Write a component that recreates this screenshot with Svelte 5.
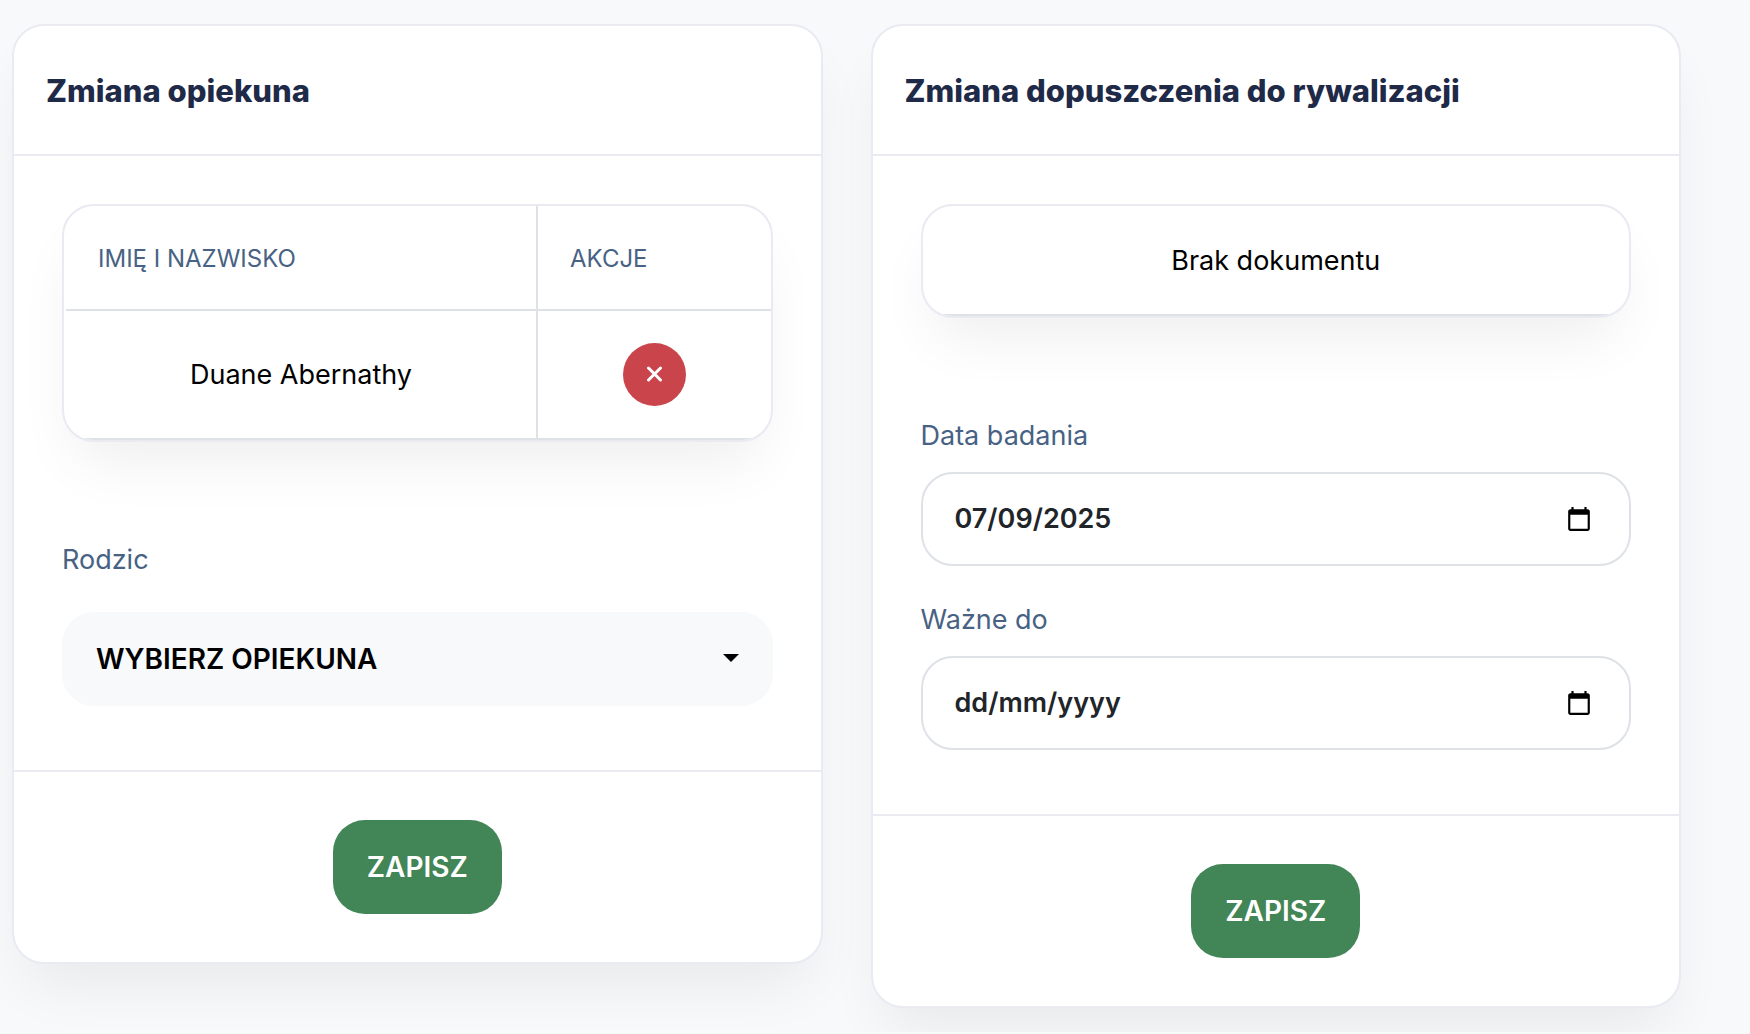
<script>
    let guardians = [{ id: 1, name: "Duane Abernathy" }];
    let parents = [];
    let parent = "";
    let examDate = "07/09/2025";
    let validUntil = "";

    function removeGuardian(id) {
        guardians = guardians.filter((g) => g.id !== id);
    }
</script>

<main>
    <form class="card" on:submit|preventDefault>
        <header>
            <h2>Zmiana opiekuna</h2>
        </header>

        <div class="body">
            <div class="table-box guardians">
                <table>
                    <thead>
                        <tr>
                            <th class="name">Imię i nazwisko</th>
                            <th>Akcje</th>
                        </tr>
                    </thead>
                    <tbody>
                        {#each guardians as guardian (guardian.id)}
                            <tr>
                                <td>{guardian.name}</td>
                                <td>
                                    <button
                                        type="button"
                                        class="remove"
                                        aria-label="Usuń"
                                        on:click={() => removeGuardian(guardian.id)}
                                    >
                                        <svg viewBox="0 0 17 17" width="17" height="17">
                                            <path d="M2.5 2 14.5 14M14.5 2 2.5 14" />
                                        </svg>
                                    </button>
                                </td>
                            </tr>
                        {/each}
                    </tbody>
                </table>
            </div>

            <div class="group parent">
                <label for="parent">Rodzic</label>
                <div class="select">
                    <select id="parent" bind:value={parent}>
                        <option value="">WYBIERZ OPIEKUNA</option>
                        {#each parents as p}
                            <option value={p.id}>{p.name}</option>
                        {/each}
                    </select>
                    <svg class="caret" viewBox="0 0 16 8" width="16" height="8">
                        <path d="M0 0h16L8 8z" />
                    </svg>
                </div>
            </div>
        </div>

        <footer>
            <button type="submit" class="save">ZAPISZ</button>
        </footer>
    </form>

    <form class="card" on:submit|preventDefault>
        <header>
            <h2>Zmiana dopuszczenia do rywalizacji</h2>
        </header>

        <div class="body">
            <div class="table-box documents">
                <table>
                    <tbody>
                        <tr>
                            <td>Brak dokumentu</td>
                        </tr>
                    </tbody>
                </table>
            </div>

            <div class="group">
                <label for="exam-date">Data badania</label>
                <div class="date">
                    <input type="text" id="exam-date" placeholder="dd/mm/yyyy" bind:value={examDate} />
                    <button type="button" aria-label="Kalendarz">
                        <svg viewBox="0 0 24 24" width="26" height="26">
                            <path d="M20 3h-1V1h-2v2H7V1H5v2H4c-1.1 0-2 .9-2 2v16c0 1.1.9 2 2 2h16c1.1 0 2-.9 2-2V5c0-1.1-.9-2-2-2zm0 18H4V8h16v13z" />
                        </svg>
                    </button>
                </div>
            </div>

            <div class="group">
                <label for="valid-until">Ważne do</label>
                <div class="date">
                    <input type="text" id="valid-until" placeholder="dd/mm/yyyy" bind:value={validUntil} />
                    <button type="button" aria-label="Kalendarz">
                        <svg viewBox="0 0 24 24" width="26" height="26">
                            <path d="M20 3h-1V1h-2v2H7V1H5v2H4c-1.1 0-2 .9-2 2v16c0 1.1.9 2 2 2h16c1.1 0 2-.9 2-2V5c0-1.1-.9-2-2-2zm0 18H4V8h16v13z" />
                        </svg>
                    </button>
                </div>
            </div>
        </div>

        <footer>
            <button type="submit" class="save">ZAPISZ</button>
        </footer>
    </form>
</main>

<style>
    :global(body) {
        background: #f8f9fb;
        overflow: hidden;
    }

    main {
        display: grid;
        grid-template-columns: 1fr 1fr;
        align-items: start;
        gap: 48px;
        padding: 24px 69px 24px 12px;
        font-family: Inter, "Liberation Sans", sans-serif;
        font-size: 27px;
        line-height: 42px;
        color: #000;
    }

    .card,
    .table-box {
        border: 2px solid #e9eaf2;
        border-radius: 32px;
        background: #fff;
        box-shadow: 0 32px 60px -14px rgba(0, 0, 0, 0.07);
    }

    header {
        padding: 41px 32px 39px;
        border-bottom: 2px solid #e9eaf2;
    }

    h2 {
        margin: 0;
        font-size: 31px;
        line-height: 48px;
        font-weight: 800;
        color: #1f2a48;
    }

    .body {
        padding: 48px 48px 64px;
    }

    .table-box {
        overflow: hidden;
        margin-bottom: 97px;
    }

    .guardians {
        padding-left: 2px;
    }

    table {
        width: 100%;
        border-spacing: 0;
    }

    th,
    td {
        padding: 32px;
        border-bottom: 2px solid #dee2e6;
        text-align: center;
    }

    th {
        padding: 33px 32px 31px;
        font-size: 24px;
        line-height: 39px;
        font-weight: 400;
        text-align: left;
        text-transform: uppercase;
        color: #486284;
    }

    .documents td {
        padding: 34px 32px 32px;
    }

    th:not(:last-child),
    td:not(:last-child) {
        border-right: 2px solid #dee2e6;
    }

    .name {
        width: 67%;
        box-sizing: border-box;
    }

    .remove {
        display: block;
        width: 63px;
        height: 63px;
        margin: 0 auto;
        padding: 0;
        border: none;
        border-radius: 50%;
        background: #ca444b;
        cursor: pointer;
    }

    .remove svg {
        display: block;
        margin: 0 auto;
        fill: none;
        stroke: #fff;
        stroke-width: 3;
        stroke-linecap: round;
    }

    .group + .group {
        margin-top: 33px;
    }

    label {
        display: block;
        margin-bottom: 15px;
        color: #486284;
    }

    .parent label {
        margin-bottom: 31px;
    }

    .select {
        position: relative;
    }

    select {
        appearance: none;
        display: block;
        width: 100%;
        height: 94px;
        padding: 0 34px;
        border: none;
        border-radius: 32px;
        background: #f8f9fb;
        font: inherit;
        font-size: 28px;
        font-weight: 600;
        color: #000;
    }

    .caret {
        position: absolute;
        top: 42px;
        right: 34px;
        pointer-events: none;
    }

    .date {
        display: flex;
        align-items: center;
        height: 90px;
        padding: 0 37px 0 32px;
        border: 2px solid #dee2e6;
        border-radius: 32px;
    }

    .date input {
        flex: 1;
        min-width: 0;
        padding: 0;
        border: none;
        outline: none;
        background: none;
        font: inherit;
        font-weight: 600;
        color: #212529;
    }

    .date input::placeholder {
        color: #212529;
        opacity: 1;
    }

    .date button {
        padding: 0;
        border: none;
        background: none;
        cursor: pointer;
    }

    .date svg {
        display: block;
    }

    footer {
        display: flex;
        justify-content: center;
        padding: 48px;
        border-top: 2px solid #e9eaf2;
    }

    .save {
        height: 94px;
        padding: 0 34px;
        border: none;
        border-radius: 32px;
        background: #428557;
        color: #fff;
        font: inherit;
        font-size: 28px;
        font-weight: 600;
        cursor: pointer;
    }
</style>
